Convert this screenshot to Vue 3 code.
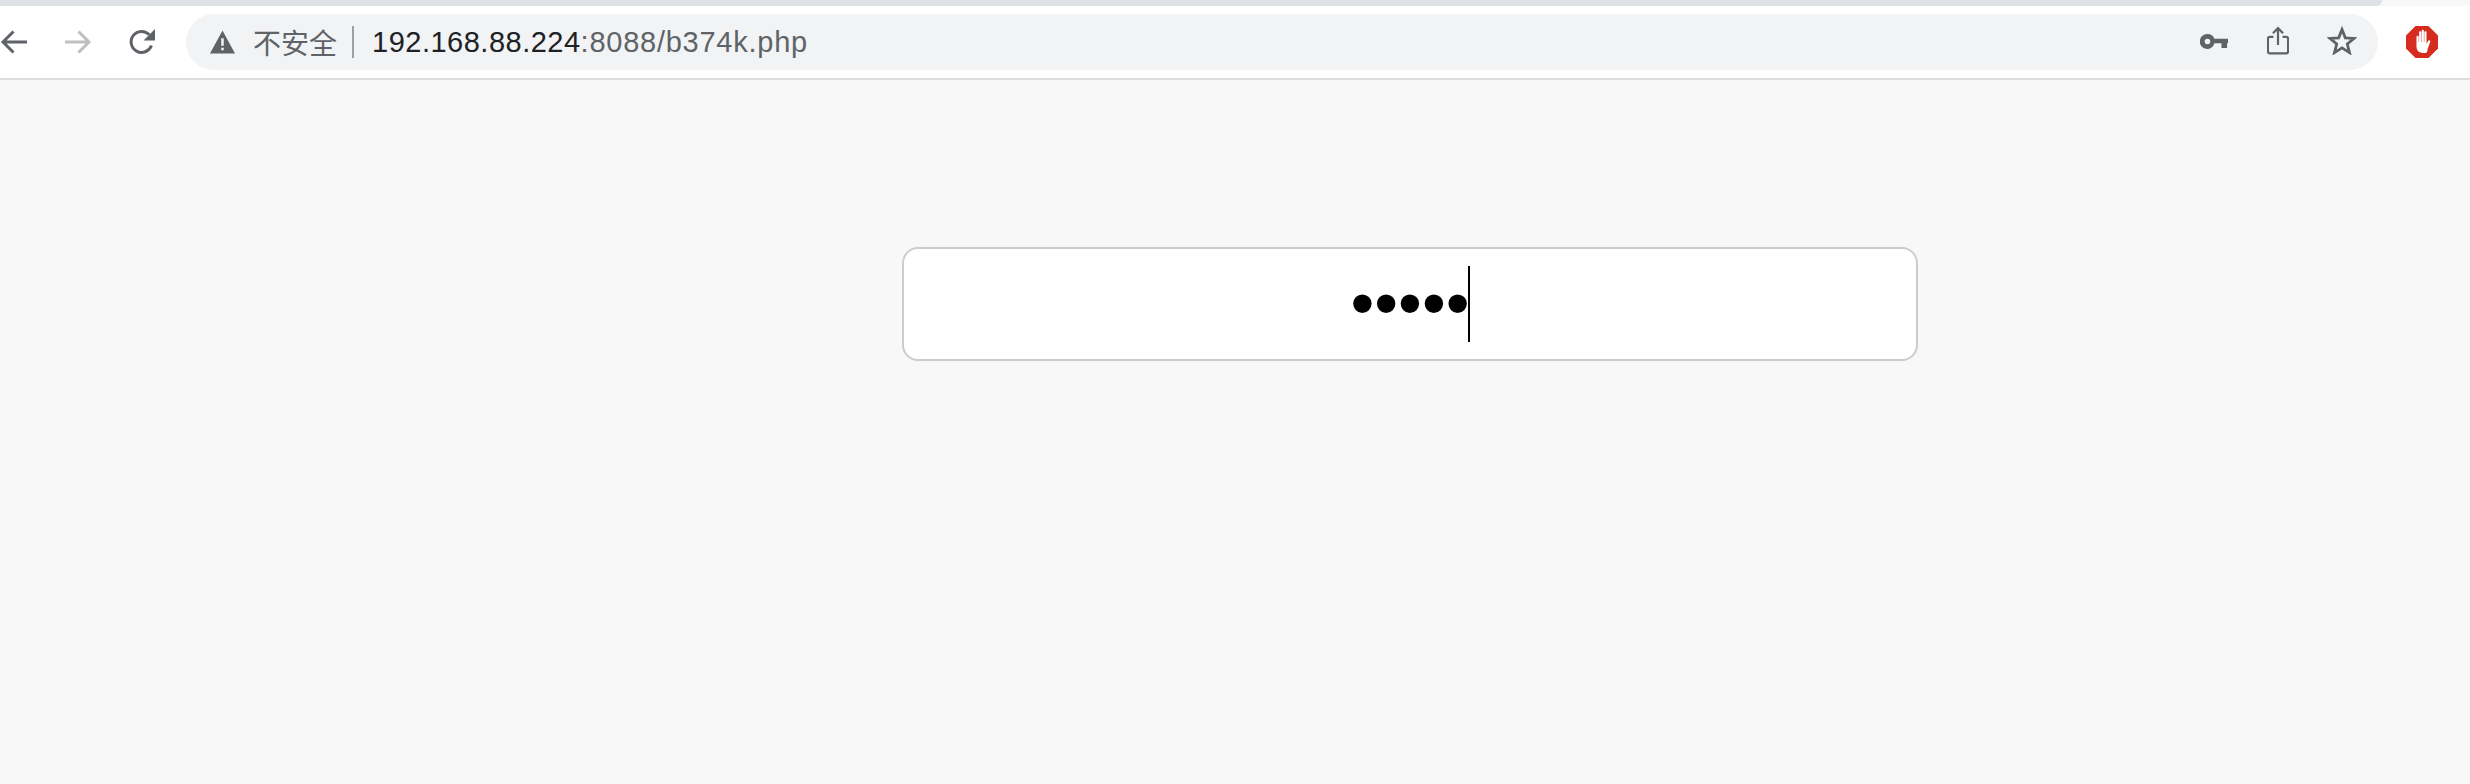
<script setup>
const password = '12345'
</script>

<template>
  <div class="page">
    <div class="tabstrip"></div>
    <header class="toolbar">
      <svg class="nav back" viewBox="0 0 28 28"><path d="M27 14H3M13.500 3.500 3 14l10.500 10.500" /></svg>
      <svg class="nav forward" viewBox="0 0 28 28"><path d="M1 14h24M14.500 3.500 25 14 14.500 24.500" /></svg>
      <svg class="reload" viewBox="0 0 28 28">
        <path class="arc" d="M23.500 17.500A10.500 10.500 0 1 1 21.300 6.700" />
        <path class="fill" d="M27 1v11.500H15.500z" />
      </svg>
      <div class="omnibox">
        <svg class="warn" viewBox="0 0 26 24"><path fill-rule="evenodd" d="M13 0 26 24H0zM11.700 8v8h2.600V8zM11.700 18v2.700h2.600V18z" /></svg>
        <span class="insecure">不安全</span>
        <span class="divider"></span>
        <span class="url"><span class="host">192.168.88.224</span>:8088/b374k.php</span>
        <div class="actions">
          <svg class="key" viewBox="0 0 30 16"><path fill-rule="evenodd" d="M8 0a8 8 0 0 1 7.500 5H30v5h-1v5h-6v-5h-7.500A8 8 0 1 1 8 0zm0 5a3 3 0 1 0 0 6 3 3 0 0 0 0-6z" /></svg>
          <svg class="share" viewBox="0 0 24 30"><path d="M7 11H3a2 2 0 0 0-2 2v14a2 2 0 0 0 2 2h18a2 2 0 0 0 2-2V13a2 2 0 0 0-2-2h-4M12 20V2M6.500 7 12 1.500 17.500 7" /></svg>
          <svg class="star" viewBox="0 0 30 29"><path d="M15 3.500 18.300 11.800 27 12.400 20.300 18 22.500 26.600 15 21.900 7.500 26.600 9.700 18 3 12.400 11.700 11.800z" /></svg>
        </div>
      </div>
      <svg class="blocker" viewBox="0 0 32 32">
        <path class="octagon" d="M9.500 0h13L32 9.500v13L22.500 32h-13L0 22.500v-13z" />
        <path class="hand" d="M10.500 11c0-1.600 2.200-1.600 2.200 0v5h.4V6.500c0-1.600 2.200-1.600 2.200 0V16h.4V5c0-1.600 2.200-1.600 2.200 0v11h.4V6.500c0-1.600 2.200-1.600 2.200 0V18l1.500-3c.8-1.600 2.800-.8 2.200.9l-2.600 7C21.800 25.900 20.300 27 18 27c-4.500 0-7.500-2-7.500-6.500z" />
      </svg>
    </header>
    <main class="content">
      <div class="field">
        <input class="password" type="password" :value="password" readonly />
        <span class="caret"></span>
      </div>
    </main>
  </div>
</template>

<style scoped>
.page {
  height: 784px;
  background: #f8f8f8;
  overflow: hidden;
  font-family: "Liberation Sans", "Noto Sans CJK SC", sans-serif;
}

.tabstrip {
  width: 2382px;
  height: 6px;
  background: #dee1e6;
  border-bottom-right-radius: 10px;
}

.toolbar {
  height: 72px;
  background: #fff;
  border-bottom: 2px solid #dddddd;
  display: flex;
  align-items: center;
  box-sizing: content-box;
}

.nav {
  width: 28px;
  height: 28px;
  flex: none;
  fill: none;
  stroke-width: 3;
}

.back {
  margin-left: 0;
  stroke: #5f6368;
}

.forward {
  margin-left: 36px;
  stroke: #bdbfc1;
}

.reload {
  width: 28px;
  height: 28px;
  flex: none;
  margin-left: 36px;
}

.reload .arc {
  fill: none;
  stroke: #5f6368;
  stroke-width: 3;
}

.reload .fill {
  fill: #5f6368;
}

.omnibox {
  margin-left: 30px;
  width: 2192px;
  height: 56px;
  flex: none;
  background: #f1f3f4;
  border-radius: 28px;
  display: flex;
  align-items: center;
}

.warn {
  width: 25px;
  height: 24px;
  margin-left: 24px;
  fill: #5f6368;
  flex: none;
}

.insecure {
  margin-left: 18px;
  font-size: 28px;
  color: #5f6368;
}

.divider {
  width: 2px;
  height: 32px;
  margin-left: 15px;
  background: #9aa0a6;
}

.url {
  margin-left: 18px;
  font-size: 29px;
  letter-spacing: 0.75px;
  color: #5f6368;
}

.host {
  letter-spacing: 0.5px;
  color: #202124;
}

.actions {
  margin-left: auto;
  margin-right: 21px;
  display: flex;
  align-items: center;
}

.key {
  width: 28px;
  height: 15px;
  margin-bottom: 1px;
  fill: #5f6368;
}

.share {
  width: 22px;
  height: 29px;
  margin-left: 39px;
  margin-bottom: 3px;
  fill: none;
  stroke: #5f6368;
  stroke-width: 2.4;
}

.star {
  width: 30px;
  height: 29px;
  margin-left: 38px;
  margin-bottom: 3px;
  fill: none;
  stroke: #5f6368;
  stroke-width: 2.8;
}

.blocker {
  width: 32px;
  height: 32px;
  flex: none;
  margin-left: 28px;
}

.octagon {
  fill: #d62b1f;
}

.hand {
  fill: #fff;
}

.content {
  display: flex;
  justify-content: center;
  padding: 167px 0 0 2px;
  margin-left: 348px;
}

.field {
  position: relative;
  width: 1016px;
  height: 114px;
}

.password {
  display: block;
  width: 100%;
  height: 100%;
  box-sizing: border-box;
  background: #fff;
  border: 2px solid #cccccc;
  border-radius: 16px;
  outline: none;
  padding: 0 0 5px;
  text-align: center;
  font-family: "Liberation Sans", sans-serif;
  font-size: 68px;
  color: #000;
  caret-color: transparent;
}

.caret {
  position: absolute;
  left: 566px;
  top: 19px;
  width: 2px;
  height: 76px;
  background: #000;
}
</style>
